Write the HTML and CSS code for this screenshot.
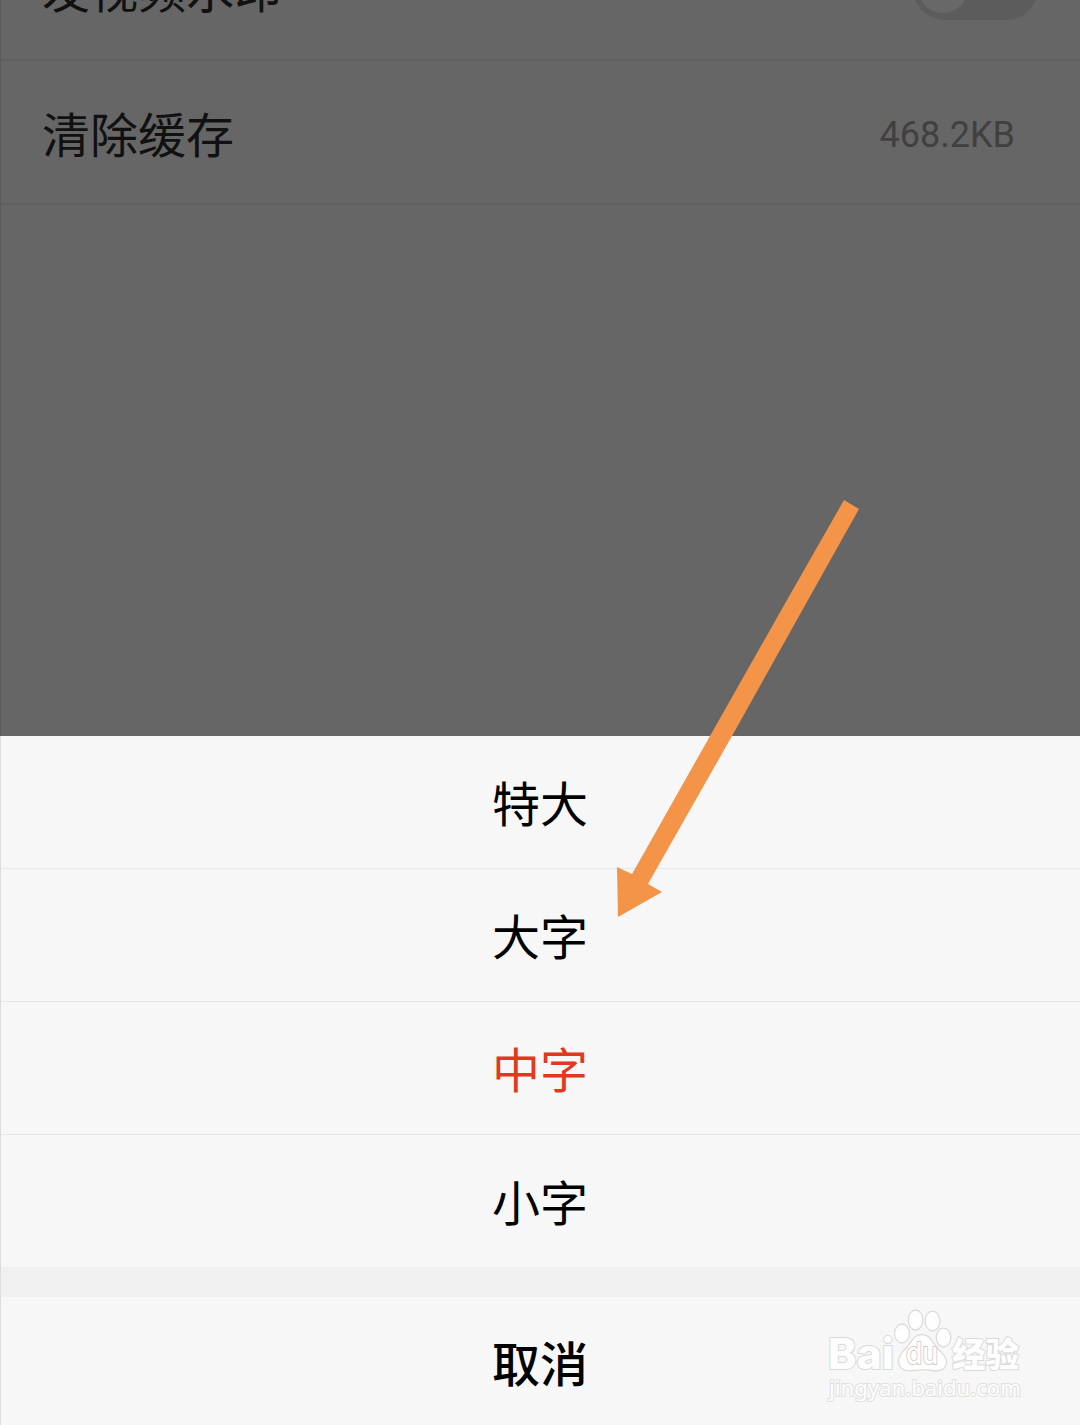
FILE: index.html
```html
<!DOCTYPE html>
<html lang="zh-CN">
<head>
<meta charset="utf-8">
<title>设置</title>
<link rel="stylesheet" href="styles.css">
</head>
<body>
<div class="screen">
  <main class="settings">
    <div class="row">
      <span class="row-label">发视频水印</span>
      <span class="toggle"><span class="knob"></span></span>
    </div>
    <div class="row">
      <span class="row-label">清除缓存</span>
      <span class="row-value">468.2KB</span>
    </div>
  </main>
  <section class="sheet">
    <div class="option">特大</div>
    <div class="option">大字</div>
    <div class="option selected">中字</div>
    <div class="option">小字</div>
    <div class="cancel">取消</div>
  </section>
  <svg class="arrow" width="260" height="430" viewBox="610 495 260 430">
    <path d="M844 500L859 509L808 600L732 736L657 868L648 884L662 892L618 917L617 867L632 874L640 860L710 736L787 600Z" fill="#f39448"/>
  </svg>
  <svg class="watermark" width="210" height="110" viewBox="820 1300 210 110">
    <g fill="#fefefe" stroke="#dcdcdc" stroke-width="1.3">
      <ellipse cx="902" cy="1333.500" rx="7.500" ry="9.500"/>
      <ellipse cx="915.500" cy="1320" rx="7.300" ry="10"/>
      <ellipse cx="932.500" cy="1321" rx="7.500" ry="9.800"/>
      <ellipse cx="943.500" cy="1337.500" rx="7.300" ry="9.300"/>
      <path d="M922 1334.500C930 1334.500 932 1342 938 1349C944 1355 947 1358 946.500 1363C945.500 1370 939 1372 932 1370.500C925 1369.500 920 1369.500 913 1370.500C904 1372 898.500 1368 898.500 1361C898.500 1355 903 1352 907 1347C912 1341 914 1334.500 922 1334.500Z"/>
    </g>
    <text class="mark brand" x="828" y="1369" textLength="66" lengthAdjust="spacingAndGlyphs">Bai</text>
    <text class="mark du" x="906" y="1364" textLength="32" lengthAdjust="spacingAndGlyphs">du</text>
    <text class="mark cn" x="952" y="1367" textLength="67" lengthAdjust="spacingAndGlyphs">经验</text>
    <text class="mark site" x="829" y="1396" textLength="192" lengthAdjust="spacingAndGlyphs">jingyan.baidu.com</text>
  </svg>
</div>
</body>
</html>
```
FILE: styles.css
```css
* { box-sizing: border-box; }

body {
  margin: 0;
  font-family: "Noto Sans CJK SC", sans-serif;
  color: #000;
}

.screen {
  position: relative;
  display: flex;
  flex-direction: column;
  height: 1425px;
  overflow: hidden;
  background: #f7f7f7;
}

/* Page content, dimmed behind the open sheet */
.settings {
  height: 736px;
  overflow: hidden;
  background: #666;
  border-left: 1px solid #5a5a5a;
}

.row {
  display: flex;
  align-items: center;
  justify-content: space-between;
  height: 144px;
  padding: 0 42px 0 41px;
  border-bottom: 2px solid #606060;
}

.row:first-child { margin-top: -83px; }

.row-label {
  font-size: 48px;
  line-height: 70px;
  color: #111;
}

.row:first-child .row-label { padding-bottom: 3px; }

.row-value {
  margin-right: 23px;
  padding-top: 5px;
  font-family: Roboto, sans-serif;
  font-size: 36px;
  color: #404040;
}

.toggle {
  display: flex;
  align-items: center;
  width: 125px;
  height: 64px;
  padding: 7px 5px;
  border-radius: 32px;
  background: #5c5c5c;
}

.knob {
  width: 50px;
  height: 50px;
  border-radius: 50%;
  background: #686868;
}

.sheet {
  display: flex;
  flex-direction: column;
  flex: 1;
  border-left: 1px solid #dcdcdc;
  font-size: 48px;
  line-height: 70px;
  text-align: center;
}

.option {
  height: 133px;
  padding: 30px 1px 0 0;
  border-bottom: 1px solid #e8e8e8;
}

.option:nth-child(4) {
  height: 132px;
  border-bottom: 0;
}

.selected { color: #df3a1c; }

.cancel {
  flex: 1;
  padding: 29px 1px 0 0;
  border-top: 30px solid #f0f0f0;
  font-weight: 500;
}

.arrow {
  position: absolute;
  left: 610px;
  top: 495px;
}

.watermark {
  position: absolute;
  left: 820px;
  top: 1300px;
}

.mark {
  fill: #fefefe;
  stroke: #dadada;
  stroke-width: 2px;
  paint-order: stroke;
}

.brand {
  font: 800 42px Inter, sans-serif;
}

.du {
  font: 500 30px Inter, sans-serif;
  stroke: #d0d0d0;
}

.cn {
  font: 900 34px "Noto Sans CJK SC", sans-serif;
}

.site {
  font: 22px "Noto Sans", sans-serif;
  stroke: #e0e0e0;
}
```
